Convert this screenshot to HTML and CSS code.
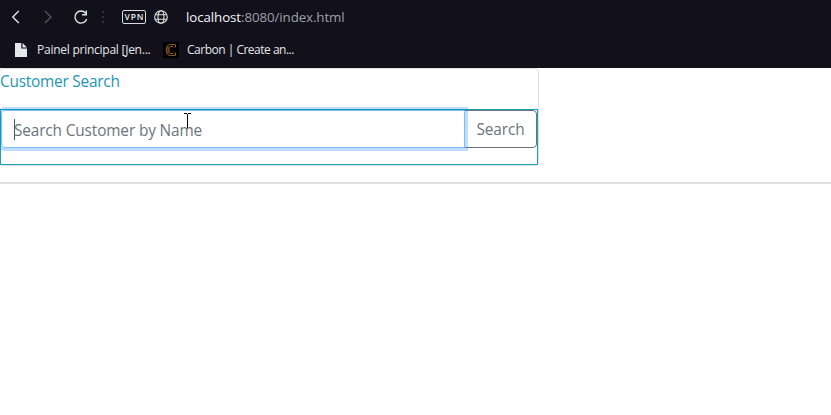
FILE: index.html
```html
<!DOCTYPE html>
<html lang="en">
<head>
<meta charset="utf-8">
<title>Customer Search</title>
<link rel="stylesheet" href="styles.css">
</head>
<body>
<header class="browser">
  <div class="toolbar">
    <svg class="icon back" width="10" height="16" viewBox="0 0 10 16"><path d="M7.8 2 1.8 8l6 6"/></svg>
    <svg class="icon forward" width="10" height="16" viewBox="0 0 10 16"><path d="m2 2 6 6-6 6"/></svg>
    <svg class="icon reload" width="16" height="16" viewBox="0 0 16 16"><path d="M12.6 4.2A6 6 0 1 0 13.7 10M13.3 1.5v4.2H9.1"/></svg>
    <svg class="dots" width="2" height="12" viewBox="0 0 2 12"><path d="M0 0h2v2H0zM0 5h2v2H0zM0 10h2v2H0z"/></svg>
    <span class="vpn">VPN</span>
    <svg class="icon globe" width="14" height="14" viewBox="0 0 14 14"><circle cx="7" cy="7" r="6.3"/><ellipse cx="7" cy="7" rx="3" ry="6.3"/><path d="M1.3 4.7h11.4M1.3 9.3h11.4"/></svg>
    <span class="url"><b>localhost</b>:8080/index.html</span>
  </div>
  <nav class="bookmarks">
    <svg class="page" width="12" height="14" viewBox="0 0 12 14"><path d="M0 0h6.3v5.5H12V14H0z"/><path d="M7.5 0 12 4.4H7.5z"/></svg>
    <span class="bookmark first">Painel principal [Jen...</span>
    <span class="carbon"><svg width="12" height="14" viewBox="0 0 12 14"><path d="M10.5 4.5V1.6H5.2C2.8 1.6 1.2 3.5 1.2 7s1.6 5.4 4 5.4h5.3V9.5M8.5 4.5 7.8 3.5H6C4.5 3.5 4 5 4 7s.5 3.5 2 3.5h1.8l.7-1"/><path d="M3 3v8"/></svg></span>
    <span class="bookmark second">Carbon | Create an...</span>
  </nav>
</header>
<main>
  <section class="card">
    <h1 class="title">Customer Search</h1>
    <form class="search">
      <div class="field"><span class="placeholder">Search Customer by Name</span></div>
      <button class="submit" type="button"><span>Search</span></button>
    </form>
  </section>
  <hr class="rule">
</main>
<svg class="pointer" width="7" height="15" viewBox="0 0 7 15"><path d="M0 .5h3M4 .5h3M3.5 1v14"/></svg>
</body>
</html>
```
FILE: styles.css
```css
* { box-sizing: border-box; }
body { margin: 0; background: #fff; font-family: "Open Sans", sans-serif; overflow: hidden; }
.browser { height: 68px; background: #12101a; color: #e4e7ea; }
.toolbar { height: 34px; display: flex; align-items: center; padding-left: 11px; }
.toolbar svg, .bookmarks svg { display: block; flex: none; }
.icon { fill: none; stroke: #e0e5e6; stroke-width: 1.4; }
.forward { margin-left: 22px; stroke: #56564e; }
.reload { margin-left: 20px; }
.dots { margin-left: 13px; fill: #35352f; }
.vpn { width: 24px; height: 14px; margin-left: 18px; border: 1px solid #d7dbdd; border-radius: 2px; font-size: 8.5px; line-height: 12px; letter-spacing: .9px; text-align: center; padding-left: 1px; font-weight: 600; }
.globe { margin-left: 8px; stroke-width: 1.1; }
.url { margin-left: 18px; font-size: 13.3px; color: #9da0aa; white-space: nowrap; letter-spacing: -.08px; }
.url b { color: #f4f6f8; font-weight: 400; }
.bookmarks { height: 32px; display: flex; align-items: center; padding-left: 15px; }
.page { fill: #e3e7e9; }
.bookmark { font-size: 12px; line-height: 16px; white-space: nowrap; letter-spacing: -.25px; }
.first { width: 114px; margin-left: 10px; }
.carbon { width: 16px; height: 16px; margin-left: 12px; background: #000; display: grid; place-items: center; }
.carbon svg { fill: none; stroke: #94602a; stroke-width: 1; }
.second { margin-left: 8px; letter-spacing: -.5px; }
.card { width: 540px; height: 98px; margin-left: -1px; border: 1px solid #dfdfdf; border-radius: 4px; }
.title { height: 40px; margin: 0; font-size: 15.4px; line-height: 26px; font-weight: 400; color: #2494b3; letter-spacing: -.23px; }
.search { height: 56px; display: flex; border: 1px solid #17a2b8; }
.field { width: 464px; height: 38px; border: 1px solid #80bdff; border-radius: 4px 0 0 4px; box-shadow: 0 0 0 3px rgba(0,123,255,.25); padding: 8px 12px; position: relative; z-index: 1; }
.placeholder { display: block; height: 21px; border-left: 1px solid #495057; text-indent: -1px; font-size: 15.4px; line-height: 24px; color: #6c757d; white-space: nowrap; letter-spacing: -.14px; }
.submit { width: 73px; height: 38px; margin-left: -1px; padding: 2px 0 0; border: 1px solid #6c757d; border-radius: 0 4px 4px 0; background: #fff; color: #6c757d; font: 15.4px/22px "Open Sans", sans-serif; letter-spacing: -.1px; }
.rule { height: 2px; border: 0; margin: 16px 0 0; background: #dfdfdf; }
.pointer { position: absolute; left: 184px; top: 113px; z-index: 2; fill: none; stroke: #000; stroke-width: 1; }
```
